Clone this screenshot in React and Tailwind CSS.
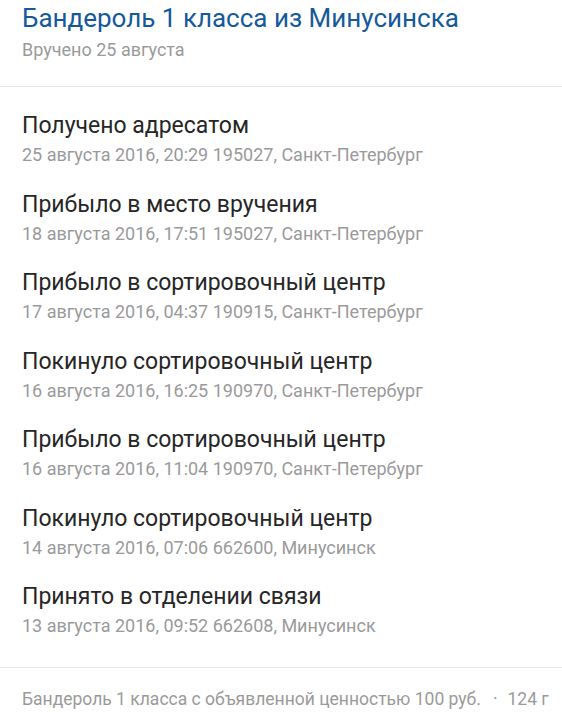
const events = [
  { title: "Получено адресатом", info: "25 августа 2016, 20:29 195027, Санкт-Петербург" },
  { title: "Прибыло в место вручения", info: "18 августа 2016, 17:51 195027, Санкт-Петербург" },
  { title: "Прибыло в сортировочный центр", info: "17 августа 2016, 04:37 190915, Санкт-Петербург" },
  { title: "Покинуло сортировочный центр", info: "16 августа 2016, 16:25 190970, Санкт-Петербург" },
  { title: "Прибыло в сортировочный центр", info: "16 августа 2016, 11:04 190970, Санкт-Петербург" },
  { title: "Покинуло сортировочный центр", info: "14 августа 2016, 07:06 662600, Минусинск" },
  { title: "Принято в отделении связи", info: "13 августа 2016, 09:52 662608, Минусинск" },
];

const App = () => {
  return (
    <div className="w-[562px] h-[716px] overflow-hidden bg-white font-['Roboto',sans-serif]">
      {/* header */}
      <div className="px-[22px] pb-[24px] border-b border-[#e6e6e6]">
        <h1 className="text-[26px] leading-[36px] text-[#15599b]">
          Бандероль 1 класса из Минусинска
        </h1>
        <p className="mt-[2px] text-[18px] leading-[24px] text-[#9a9a9a]">Вручено 25 августа</p>
      </div>

      {/* history */}
      <div className="px-[22px] pt-[25px] pb-[29px] flex flex-col gap-[23.5px] border-b border-[#e6e6e6]">
        {events.map((ev, index) => (
          <div key={index}>
            <div className="text-[23px] leading-[28px] text-[#262626]">{ev.title}</div>
            <div className="mt-[3px] text-[18px] leading-[24px] text-[#9a9a9a]">{ev.info}</div>
          </div>
        ))}
      </div>

      {/* footer */}
      <div className="px-[22px] pt-[19px] whitespace-nowrap text-[17.5px] leading-[24px] text-[#9a9a9a]">
        Бандероль 1 класса с объявленной ценностью 100 руб.
        <span className="ml-[12px] mr-[10px]">·</span>
        124 г
      </div>
    </div>
  );
};

export default App;
